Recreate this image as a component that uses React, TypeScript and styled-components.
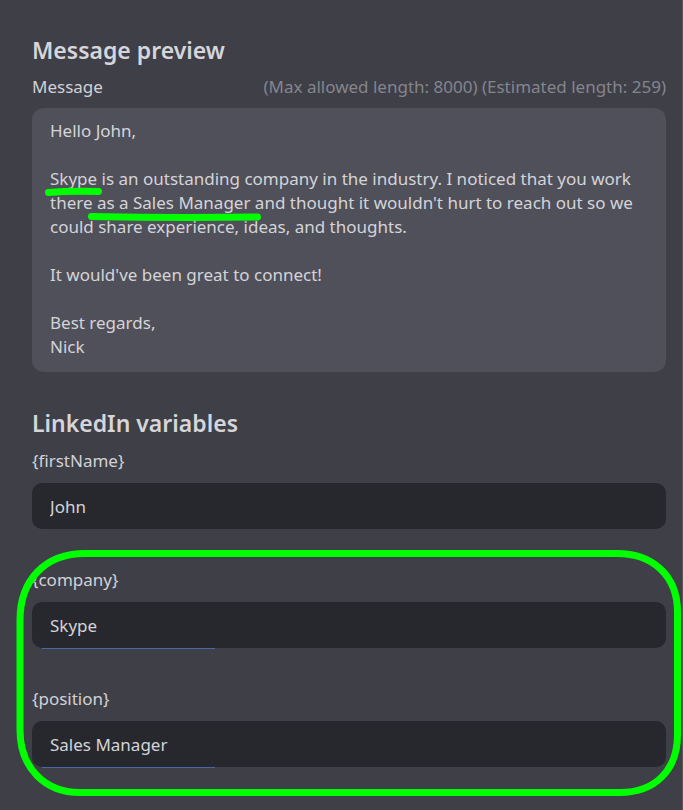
import React from "react";
import styled, { createGlobalStyle } from "styled-components";

const Global = createGlobalStyle`
  html, body { margin: 0; padding: 0; background: #3f3f48; }
  body { font-family: "Noto Sans", "Open Sans", sans-serif; }
  * { box-sizing: border-box; }
`;

const Page = styled.div`
  position: relative;
  width: 683px;
  min-height: 810px;
  background: #3f3f48;
  border-right: 1px solid #56565e;
  padding: 36px 16px 40px 32px;
  color: #d2d2d6;
`;

const SectionTitle = styled.h2<{ $gap?: number }>`
  margin: ${(p) => p.$gap ?? 0}px 0 0;
  font-size: 23px;
  line-height: 28px;
  font-weight: 600;
  color: #d6d6da;
`;

const LabelRow = styled.div`
  display: flex;
  justify-content: space-between;
  align-items: center;
  margin-top: 11px;
  height: 22px;
  font-size: 17px;
`;

const Label = styled.span`
  color: #d2d2d6;
`;

const Meta = styled.span`
  color: #85858d;
`;

const MessageBox = styled.div`
  margin-top: 11px;
  background: #50505a;
  border-radius: 12px;
  padding: 11px 18px 13px;
  font-size: 17px;
  line-height: 24px;
  white-space: pre-line;
  color: #d4d4d8;
`;

const Field = styled.div<{ $gap: number }>`
  margin-top: ${(p) => p.$gap}px;
  display: flex;
  flex-direction: column;
`;

const FieldLabel = styled.label`
  font-size: 17px;
  line-height: 22px;
  color: #d2d2d6;
`;

const InputWrap = styled.div<{ $focused?: boolean }>`
  position: relative;
  margin-top: 11px;
  &::after {
    content: "";
    display: ${(p) => (p.$focused ? "block" : "none")};
    position: absolute;
    left: 10px;
    bottom: -1px;
    width: 173px;
    height: 1px;
    background: #4c66a6;
  }
`;

const Input = styled.input`
  display: block;
  width: 100%;
  height: 46px;
  border: none;
  outline: none;
  border-radius: 10px;
  background: #27282d;
  color: #d4d4d8;
  padding: 0 18px;
  font-family: inherit;
  font-size: 17px;
`;

const Overlay = styled.svg`
  position: absolute;
  left: 0;
  top: 0;
  pointer-events: none;
`;

const message = `Hello John,

Skype is an outstanding company in the industry. I noticed that you work
there as a Sales Manager and thought it wouldn't hurt to reach out so we
could share experience, ideas, and thoughts.

It would've been great to connect!

Best regards,
Nick`;

const fields = [
  { name: "{firstName}", value: "John", gap: 13, focused: false },
  { name: "{company}", value: "Skype", gap: 40, focused: true },
  { name: "{position}", value: "Sales Manager", gap: 40, focused: true },
];

export default function App() {
  return (
    <>
      <Global />
      <Page>
        <SectionTitle>Message preview</SectionTitle>
        <LabelRow>
          <Label>Message</Label>
          <Meta>(Max allowed length: 8000) (Estimated length: 259)</Meta>
        </LabelRow>
        <MessageBox>{message}</MessageBox>

        <SectionTitle $gap={37}>LinkedIn variables</SectionTitle>
        {fields.map((f) => (
          <Field key={f.name} $gap={f.gap}>
            <FieldLabel>{f.name}</FieldLabel>
            <InputWrap $focused={f.focused}>
              <Input defaultValue={f.value} />
            </InputWrap>
          </Field>
        ))}

        <Overlay width="683" height="810" viewBox="0 0 683 810">
          <g fill="none" stroke="#00ff00" strokeLinecap="round">
            <path
              strokeWidth="7"
              d="M 85 553.5 H 617 C 652 553.5 677.5 575 677.5 612 V 735 C 677.5 770 655 792.5 620 792.5 H 80 C 45 792.5 20 768 20 730 V 620 C 20 580 45 553.5 85 553.5 Z"
            />
            <path strokeWidth="7" d="M 48.5 192.5 Q 70 190.5 98.5 191.5" />
            <path strokeWidth="7" d="M 91.5 216.5 Q 170 218 257.5 217" />
          </g>
        </Overlay>
      </Page>
    </>
  );
}
